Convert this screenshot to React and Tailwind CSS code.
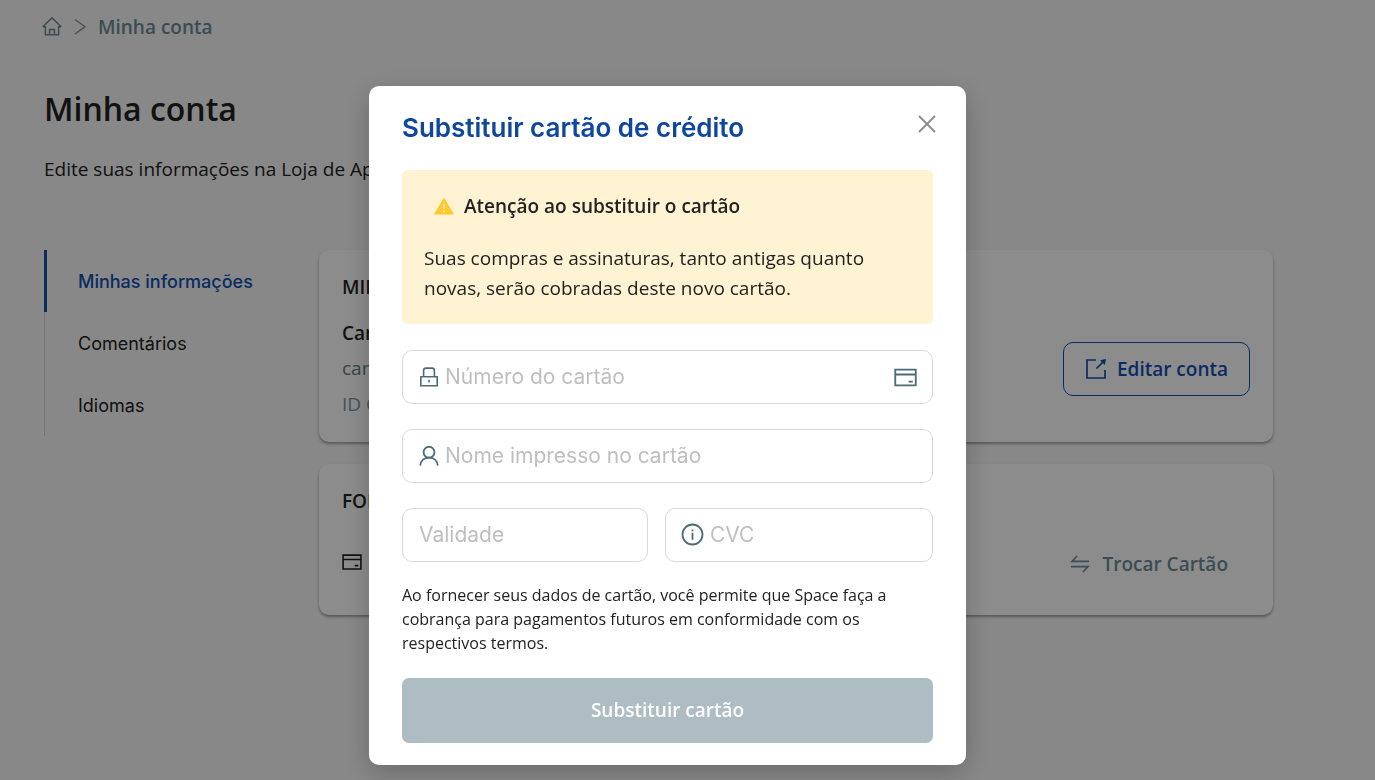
import { useState } from 'react';

const MENU = ['Minhas informações', 'Comentários', 'Idiomas'];

function Icon({ className, children, size = 24, strokeWidth = 1.5 }) {
    return (
        <svg
            className={className}
            viewBox={`0 0 ${size} ${size}`}
            fill="none"
            stroke="currentColor"
            strokeWidth={strokeWidth}
            aria-hidden="true"
        >
            {children}
        </svg>
    );
}

const HomeIcon = () => (
    <Icon className="w-5 h-5 shrink-0" size={20} strokeWidth={1.5}>
        <path d="M.8 9.7 10 .9l9.2 8.8M.8 9.7h2.6v8.1h13.2V9.7h2.6M7.6 17.8v-5.200h4.8v5.200" />
    </Icon>
);

const ChevronIcon = () => (
    <Icon className="mx-[9px] w-[18px] h-[18px] shrink-0 text-[#8a9a9f]" size={18} strokeWidth={1.5}>
        <path d="m4 1.5 10 7.2L4 16" />
    </Icon>
);

const CardIcon = ({ className }) => (
    <Icon className={className} size={24} strokeWidth={1.9}>
        <path d="M1.3 3.7h21.4v16.600H1.3zM1.3 8.900h21.4M15.2 16.300h4.400" />
    </Icon>
);

const LockIcon = () => (
    <Icon className="w-5 h-5 shrink-0" size={20} strokeWidth={1.6}>
        <path d="M1.8 9.8h16.4v9H1.8zM4.6 9.800V3.400c0-1.500.9-2.300 2.300-2.300h6.200c1.400 0 2.300.8 2.300 2.300v6.400M10 12.800v2.800" />
    </Icon>
);

const UserIcon = () => (
    <Icon className="w-5 h-5 shrink-0" size={20} strokeWidth={1.8}>
        <circle cx="10" cy="6.2" r="5.4" />
        <path d="M1.3 19.600c.4-4.900 3.900-8 8.700-8s8.300 3.100 8.700 8" />
    </Icon>
);

const InfoIcon = () => (
    <Icon className="-mx-px w-6 h-6 shrink-0" size={24} strokeWidth={1.8}>
        <circle cx="11.5" cy="11.5" r="10" />
        <path d="M11.5 9.800v7M11.500 6.400v1.800" />
    </Icon>
);

const EditIcon = () => (
    <Icon className="w-[22px] h-[22px] shrink-0" size={22} strokeWidth={1.7}>
        <path d="M11 2H2v18h18v-8M11.500 10.500 19 3" />
        <path d="m21 1-1.200 6L15 2.200z" fill="currentColor" stroke="none" />
    </Icon>
);

const SwapIcon = () => (
    <Icon className="w-5 h-5 shrink-0" size={20} strokeWidth={1.7}>
        <path d="M19 7.400H2l5-5.400M1 12.600h17l-5 5.400" />
    </Icon>
);

const WarningIcon = () => (
    <svg className="w-5 h-5 shrink-0" viewBox="0 0 20 20" aria-hidden="true">
        <path d="M10 2.300 19.300 18H.7z" fill="#fdc92f" stroke="#fdc92f" strokeLinejoin="round" />
        <path d="M10 8v5M10 14.500V16" stroke="#fff3d3" strokeWidth="1.4" />
    </svg>
);

function Field({ label, icon, trailing, className = '' }) {
    return (
        <label
            className={`flex h-[54px] items-center gap-1.5 rounded-[10px] border border-[#d9d9d9] bg-white px-4 text-[#4c6b77] ${className}`}
        >
            {icon}
            <input
                aria-label={label}
                placeholder={label}
                className="min-w-0 flex-1 bg-transparent font-['Inter',sans-serif] text-[21px] text-[#222] placeholder-[#bfbfbf] outline-none"
            />
            {trailing}
        </label>
    );
}

function AccountPage() {
    const [active, setActive] = useState(MENU[0]);

    return (
        <div className="px-11 pt-3">
            <nav aria-label="Breadcrumb" className="-ml-0.5 flex h-[30px] items-center text-[#6d8b97]">
                <a href="#inicio" aria-label="Início">
                    <HomeIcon />
                </a>
                <ChevronIcon />
                <a href="#conta" className="text-[19px] font-semibold">Minha conta</a>
            </nav>

            <h1 className="mt-11 text-[32px] leading-[46px] font-semibold">Minha conta</h1>
            <p className="mt-[22px] text-[19px] leading-[30px]">Edite suas informações na Loja de Aplicativos</p>

            <div className="mt-[66px] flex items-start pr-[58px]">
                <nav aria-label="Conta" className="flex w-[275px] shrink-0 flex-col font-['Inter',sans-serif] text-[18px]">
                    {MENU.map((item) => (
                        <button
                            key={item}
                            type="button"
                            onClick={() => setActive(item)}
                            className={`h-[62px] text-left ${active === item ? 'border-l-3 border-[#1150b4] pl-[31px] font-medium text-[#1150b4]' : 'border-l border-[#d5d5d5] pl-[33px]'}`}
                        >
                            {item}
                        </button>
                    ))}
                </nav>

                <div className="flex min-w-0 flex-1 flex-col gap-[22px]">
                    <section className="flex h-[192px] items-center justify-between rounded-[10px] bg-white px-[23px] shadow-[0_2px_3px_rgba(0,0,0,0.35)]">
                        <div className="self-start pt-[22px]">
                            <h2 className="text-[19px] leading-[30px] font-semibold">MIN</h2>
                            <p className="mt-4 text-[19px] leading-[30px] font-semibold">Can</p>
                            <p className="mt-1 text-[19px] leading-8 text-[#5f7f8c]">can</p>
                            <p className="mt-1 text-[19px] leading-8 text-[#7c98a3]">ID C</p>
                        </div>
                        <button
                            type="button"
                            className="mt-[46px] flex h-[54px] items-center gap-2.5 rounded-[10px] border border-[#1150b4] px-[21px] text-[19px] font-semibold text-[#1150b4]"
                        >
                            <EditIcon />
                            Editar conta
                        </button>
                    </section>

                    <section className="flex h-[151px] items-end justify-between rounded-[10px] bg-white px-[23px] pb-[35px] shadow-[0_2px_3px_rgba(0,0,0,0.35)]">
                        <div className="flex flex-col gap-9">
                            <h2 className="text-[19px] leading-[30px] font-semibold">FOR</h2>
                            <CardIcon className="mb-2 w-5 h-5" />
                        </div>
                        <button type="button" className="flex h-8 items-center gap-3 pr-[22px] text-[19px] font-semibold text-[#6d8b97]">
                            <SwapIcon />
                            Trocar Cartão
                        </button>
                    </section>
                </div>
            </div>
        </div>
    );
}

function ReplaceCardDialog({ onClose }) {
    return (
        <div className="fixed inset-0 flex items-start justify-center bg-black/45 pt-[86px] pr-10">
            <div
                role="dialog"
                aria-modal="true"
                aria-labelledby="dialog-title"
                className="w-full max-w-[597px] rounded-[10px] bg-white px-[33px] pt-6 pb-[22px] shadow-[0_8px_28px_rgba(0,0,0,0.22)]"
            >
                <div className="flex items-start justify-between">
                    <h2 id="dialog-title" className="font-['Inter',sans-serif] text-[26px] leading-9 font-semibold text-[#0f469e]">
                        Substituir cartão de crédito
                    </h2>
                    <button type="button" aria-label="Fechar" onClick={onClose} className="-mr-1 pt-1 text-[#8c8c8c]">
                        <Icon className="w-5 h-5" size={20} strokeWidth={1.8}>
                            <path d="m2 2 16 16M18 2 2 18" />
                        </Icon>
                    </button>
                </div>

                <div className="mt-6 rounded-[5px] bg-[#fff3d3] px-[22px] py-[21px]">
                    <p className="flex items-center gap-2.5 pl-2.5 text-[19px] leading-[30px] font-semibold">
                        <WarningIcon />
                        Atenção ao substituir o cartão
                    </p>
                    <p className="mt-[22px] text-[19px] leading-[30px]">
                        Suas compras e assinaturas, tanto antigas quanto novas, serão cobradas deste novo cartão.
                    </p>
                </div>

                <form className="mt-[26px]" onSubmit={(e) => e.preventDefault()}>
                    <div className="flex flex-col gap-[25px]">
                        <Field label="Número do cartão" icon={<LockIcon />} trailing={<CardIcon className="-mr-px w-[23px] h-[23px] shrink-0" />} />
                        <Field label="Nome impresso no cartão" icon={<UserIcon />} />
                        <div className="flex gap-[17px]">
                            <Field label="Validade" className="w-[246px]" />
                            <Field label="CVC" className="min-w-0 flex-1" icon={<InfoIcon />} />
                        </div>
                    </div>
                    <p className="mt-[21px] text-[16px] leading-6">
                        Ao fornecer seus dados de cartão, você permite que Space faça a cobrança para pagamentos futuros em
                        conformidade com os respectivos termos.
                    </p>
                    <button type="submit" className="mt-[23px] h-[65px] w-full rounded-[7px] bg-[#aebdc3] text-[19px] font-semibold text-white">
                        Substituir cartão
                    </button>
                </form>
            </div>
        </div>
    );
}

export default function App() {
    const [open, setOpen] = useState(true);

    return (
        <div className="min-h-screen bg-[#f7f7f7] font-['Open_Sans',sans-serif] text-[#222]">
            <AccountPage />
            {open && <ReplaceCardDialog onClose={() => setOpen(false)} />}
        </div>
    );
}
